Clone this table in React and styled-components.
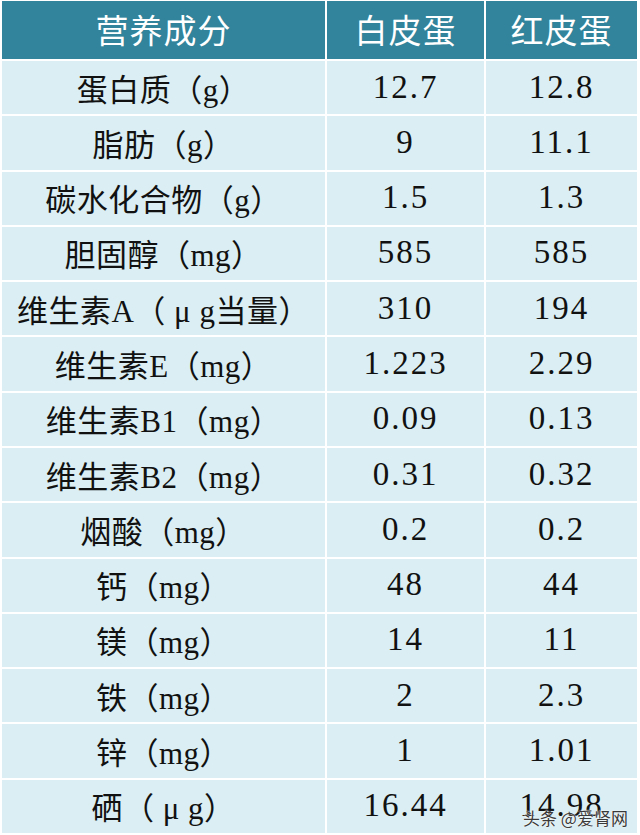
import React from 'react';
import styled, { createGlobalStyle } from 'styled-components';

const GlobalStyle = createGlobalStyle`
  html, body {
    margin: 0;
    padding: 0;
    background: #ffffff;
  }
`;

const Page = styled.div`
  width: 640px;
  height: 835px;
  padding: 1px 3px 2px 2px;
  box-sizing: border-box;
  background: #ffffff;
  position: relative;
`;

const Table = styled.div`
  display: grid;
  grid-template-columns: 323px 157px 151px;
  grid-template-rows: 58px repeat(14, 1fr);
  gap: 2px;
  height: 100%;
`;

const HeadCell = styled.div`
  background: #31849b;
  color: #ffffff;
  display: flex;
  align-items: center;
  justify-content: center;
  font-family: "Noto Sans CJK SC", "Noto Sans", sans-serif;
  font-size: 33px;
  letter-spacing: 1px;
  padding-bottom: 2px;
`;

const Cell = styled.div`
  background: #daeef3;
  color: #111111;
  display: flex;
  align-items: center;
  justify-content: center;
  font-family: "Liberation Serif", "Noto Sans CJK SC", serif;
  font-size: ${(p) => (p.$num ? '33px' : '31px')};
  letter-spacing: ${(p) => (p.$num ? '2px' : '0.5px')};
  white-space: nowrap;
  padding-bottom: 1px;
`;

const Watermark = styled.div`
  position: absolute;
  left: 523px;
  top: 805px;
  font-family: "Noto Sans CJK SC", "Noto Sans", sans-serif;
  font-size: 17px;
  color: #3a3a3a;
  text-shadow: 0 0 2px #ffffff, 0 0 1px #ffffff;
  white-space: nowrap;
`;

const rows = [
  ['蛋白质（g）', '12.7', '12.8'],
  ['脂肪（g）', '9', '11.1'],
  ['碳水化合物（g）', '1.5', '1.3'],
  ['胆固醇（mg）', '585', '585'],
  ['维生素A（ μ g当量）', '310', '194'],
  ['维生素E（mg）', '1.223', '2.29'],
  ['维生素B1（mg）', '0.09', '0.13'],
  ['维生素B2（mg）', '0.31', '0.32'],
  ['烟酸（mg）', '0.2', '0.2'],
  ['钙（mg）', '48', '44'],
  ['镁（mg）', '14', '11'],
  ['铁（mg）', '2', '2.3'],
  ['锌（mg）', '1', '1.01'],
  ['硒（ μ g）', '16.44', '14.98'],
];

export default function App() {
  return (
    <Page>
      <GlobalStyle />
      <Table>
        <HeadCell>营养成分</HeadCell>
        <HeadCell>白皮蛋</HeadCell>
        <HeadCell>红皮蛋</HeadCell>
        {rows.map((r) => (
          <React.Fragment key={r[0]}>
            <Cell>{r[0]}</Cell>
            <Cell $num>{r[1]}</Cell>
            <Cell $num>{r[2]}</Cell>
          </React.Fragment>
        ))}
      </Table>
      <Watermark>头条 @爱肾网</Watermark>
    </Page>
  );
}
